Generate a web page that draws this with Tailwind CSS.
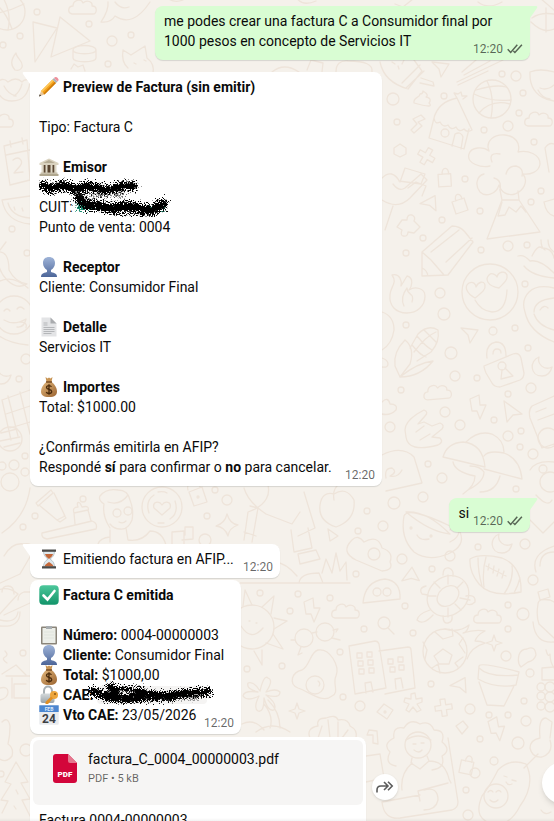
<!DOCTYPE html>
<html lang="es">
  <head>
    <meta charset="UTF-8" />
    <meta name="viewport" content="width=device-width, initial-scale=1.0" />
    <title>Chat - Facturación</title>
    <script src="https://cdn.jsdelivr.net/npm/@tailwindcss/browser@4"></script>
  </head>
  <body class="bg-[#f5f1eb] text-[#0a0a0a] font-['Roboto','Liberation_Sans',sans-serif] text-sm leading-5">
    <!-- Shared icons -->
    <svg class="absolute h-0 w-0" aria-hidden="true">
      <defs>
        <linearGradient id="gBust" x1="0" y1="0" x2="0" y2="1"><stop offset="0" stop-color="#9fb4d8" /><stop offset="1" stop-color="#4d6699" /></linearGradient>
        <linearGradient id="gBag" x1="0" y1="0" x2="1" y2="1"><stop offset="0" stop-color="#e3b87c" /><stop offset="1" stop-color="#9a6330" /></linearGradient>
        <linearGradient id="gCheck" x1="0" y1="0" x2="0" y2="1"><stop offset="0" stop-color="#4cc79b" /><stop offset="1" stop-color="#12946a" /></linearGradient>
        <linearGradient id="gLock" x1="0" y1="0" x2="0" y2="1"><stop offset="0" stop-color="#d5dadc" /><stop offset="1" stop-color="#9aa3a8" /></linearGradient>
        <filter id="rough" x="-10%" y="-60%" width="120%" height="220%" color-interpolation-filters="sRGB">
          <feTurbulence type="fractalNoise" baseFrequency="0.9" numOctaves="2" seed="4" result="n" />
          <feDisplacementMap in="SourceGraphic" in2="n" scale="14" xChannelSelector="R" yChannelSelector="G" />
        </filter>
      </defs>
      <symbol id="bust" viewBox="0 0 20 20">
        <path d="M2 20c0-3 2-4 6-5v-2C5.500 11.500 4 9 4 6c0-4 2.500-6 6-6s6 2 6 6c0 3-1.500 5.500-4 7v2c4 1 6 2 6 5z" fill="url(#gBust)" />
      </symbol>
      <symbol id="bag" viewBox="0 0 20 20">
        <path d="M6.500 0l2 1.500L10 .5l1.500 1L13.500 0l-1 5h-5z" fill="#c89555" />
        <path d="M7.500 5h5c3 2 5.500 6 5.500 9.500 0 3.500-2 5.500-8 5.500s-8-2-8-5.500C2 11 4.500 7 7.500 5z" fill="url(#gBag)" />
        <path d="M7 5h6" stroke="#7a4d22" stroke-width="1.500" />
        <path d="M12.500 9.800c-.5-.9-1.400-1.200-2.500-1.200-1.500 0-2.500.7-2.500 1.900 0 2.800 5.200 1.200 5.200 4 0 1.300-1.200 2-2.700 2-1.300 0-2.300-.4-2.800-1.500M10 7.300v10.400" fill="none" stroke="#4a2b0c" stroke-width="1.300" />
      </symbol>
      <symbol id="check2" viewBox="0 0 16 10">
        <path d="M.7 5.300l3 3.200L10.300.8M6.400 7l1.500 1.500L14.900.8" fill="none" stroke="currentColor" stroke-width="1.500" />
      </symbol>
    </svg>

    <main class="relative h-screen overflow-hidden">
      <!-- Doodle wallpaper -->
      <svg class="absolute inset-0 h-full w-full" viewBox="0 0 554 821" preserveAspectRatio="xMidYMin slice" fill="none" stroke="#eee4da" stroke-width="1.300" stroke-linejoin="round" stroke-linecap="round" aria-hidden="true">
        <defs>
          <path id="cloud" d="M-11 6c-5-1-4-8 1-8 0-6 8-8 10-3 4-4 10-1 9 3 6 0 5 8 1 8z" />
          <path id="moon" d="M-2-9c-10 4-9 19 3 19 6 0 9-5 10-9-8 4-15-3-13-10z" />
          <path id="plane" d="M-8-6L9-4 1 9-1 1z" />
          <path id="bolt" d="M-7-11l9-4 1 10 6 0-6 14-3-8-5 0z" />
          <path id="cross" d="M-3-8h5v6h6v5h-6v6h-5v-6h-6v-5h6z" />
          <path id="star" d="M0-8l2 6 6 2-6 2-2 6-2-6-6-2 6-2z" />
          <path id="diamond" d="M-8 0l7-8 9 6-6 9z" />
          <path id="padlock" d="M-7-3l12-4 4 12-12 4zM-3-4c-3-8 5-9 6-2" />
        </defs>

        <!-- small bubbles -->
        <g>
          <circle cx="37" cy="12" r="3" /><circle cx="89" cy="24" r="3" /><circle cx="20" cy="36" r="3" /><circle cx="3" cy="45" r="3" />
          <circle cx="112" cy="41" r="5" /><circle cx="131" cy="35" r="3" /><circle cx="108" cy="64" r="3" /><circle cx="393" cy="99" r="6" />
          <circle cx="444" cy="96" r="3" /><circle cx="397" cy="122" r="3" /><circle cx="502" cy="74" r="3" /><circle cx="516" cy="76" r="5" />
          <circle cx="523" cy="93" r="3" /><circle cx="519" cy="113" r="3" /><circle cx="508" cy="126" r="5" /><circle cx="484" cy="130" r="3" />
          <circle cx="534" cy="142" r="3" /><circle cx="541" cy="191" r="3" /><circle cx="531" cy="202" r="3" /><circle cx="465" cy="179" r="3" />
          <circle cx="480" cy="211" r="3" /><circle cx="442" cy="220" r="3" /><circle cx="423" cy="238" r="3" /><circle cx="508" cy="246" r="5" />
          <circle cx="481" cy="250" r="3" /><circle cx="406" cy="253" r="3" /><circle cx="527" cy="245" r="3" /><circle cx="525" cy="284" r="3" />
          <circle cx="440" cy="293" r="5" /><circle cx="444" cy="314" r="6" /><circle cx="406" cy="325" r="3" /><circle cx="493" cy="331" r="4" />
          <circle cx="515" cy="328" r="3" /><circle cx="528" cy="348" r="3" /><circle cx="451" cy="353" r="6" /><circle cx="455" cy="376" r="5" />
          <circle cx="477" cy="378" r="3" /><circle cx="401" cy="390" r="3" /><circle cx="531" cy="388" r="5" /><circle cx="508" cy="394" r="3" />
          <circle cx="445" cy="412" r="5" /><circle cx="390" cy="427" r="5" /><circle cx="460" cy="425" r="5" /><circle cx="494" cy="420" r="3" />
          <circle cx="508" cy="436" r="5" /><circle cx="521" cy="431" r="3" /><circle cx="520" cy="447" r="3" /><circle cx="533" cy="454" r="5" />
          <circle cx="428" cy="464" r="3" /><circle cx="442" cy="478" r="5" /><circle cx="516" cy="489" r="3" /><circle cx="423" cy="497" r="5" />
          <circle cx="367" cy="511" r="3" /><circle cx="394" cy="503" r="6" /><circle cx="383" cy="526" r="5" /><circle cx="358" cy="531" r="3" />
          <circle cx="402" cy="559" r="5" /><circle cx="432" cy="569" r="3" /><circle cx="450" cy="556" r="5" /><circle cx="478" cy="547" r="3" />
          <circle cx="525" cy="544" r="5" /><circle cx="533" cy="580" r="5" /><circle cx="356" cy="574" r="3" /><circle cx="298" cy="594" r="3" />
          <circle cx="330" cy="598" r="3" /><circle cx="290" cy="611" r="3" /><circle cx="405" cy="606" r="3" /><circle cx="508" cy="605" r="3" />
          <circle cx="523" cy="614" r="6" /><circle cx="364" cy="629" r="3" /><circle cx="413" cy="633" r="3" /><circle cx="508" cy="629" r="3" />
          <circle cx="340" cy="652" r="3" /><circle cx="506" cy="656" r="5" /><circle cx="282" cy="666" r="3" /><circle cx="431" cy="684" r="3" />
          <circle cx="530" cy="673" r="4" /><circle cx="343" cy="697" r="3" /><circle cx="360" cy="706" r="5" /><circle cx="470" cy="709" r="5" />
          <circle cx="489" cy="715" r="3" /><circle cx="508" cy="715" r="3" /><circle cx="524" cy="701" r="3" /><circle cx="526" cy="721" r="5" />
          <circle cx="480" cy="739" r="3" /><circle cx="518" cy="743" r="6" /><circle cx="494" cy="761" r="4" /><circle cx="475" cy="773" r="5" />
          <circle cx="466" cy="790" r="3" /><circle cx="468" cy="815" r="5" /><circle cx="12" cy="229" r="3" /><circle cx="27" cy="253" r="3" />
          <circle cx="26" cy="359" r="5" /><circle cx="19" cy="379" r="3" /><circle cx="25" cy="456" r="3" /><circle cx="26" cy="750" r="6" />
          <circle cx="260" cy="593" r="3" /><circle cx="247" cy="669" r="3" /><circle cx="23" cy="653" r="3" /><circle cx="1" cy="774" r="3" />
          <circle cx="83" cy="499" r="3" /><circle cx="35" cy="516" r="3" /><circle cx="23" cy="527" r="3" /><circle cx="215" cy="490" r="3" />
          <circle cx="227" cy="500" r="5" /><circle cx="207" cy="516" r="3" /><circle cx="205" cy="540" r="6" />
        </g>

        <!-- left and top edge -->
        <circle cx="7" cy="12" r="18" />
        <path d="M-8 14Q8 12 24 4M2-4q10 16 6 34M-10 2q14 4 22 27" />
        <path d="M33 22l24 6-22 34zM60 17l30 24-39 16z" />
        <use href="#cloud" x="83" y="8" />
        <path d="M101 22q8-12 7-20M101 22q10 1 14-6 18 12 35-14M115 2q6 8 14 5M73 50c0-6 23-6 23 0v8c0 5-23 5-23 0zM73 50c0 5 23 5 23 0" />
        <path d="M123 50l8 5 14-9 2 12q8 6 6 16M123 50q-2 12 5 18M71 69l3-5 4 3 5-2 2 6M134 63l2 1M144 60l2 1" />
        <path d="M15 70c-6-6-3-12 1-17 0 5 8 8 6 14-1 3-4 4-7 3zM-4 84q6-8 12-2 8-6 14 0 3-4 8-1-2 20-18 20-14 0-16-17zM4 86q4 8 12 10M22 84q-2 8-8 12" />
        <use href="#cloud" x="0" y="121" />
        <path d="M4 146l23-6 3 40-20 5zM6 155l24-5M10 141l1 6M22 138l1 6M13 160c6-5 11 1 7 6l-6 7 9-1" />
        <path d="M2 200l28-4M2 200q4 22 28 24M8 203q4 14 22 15M14 207l1 3M22 208l1 3" />
        <path d="M-3 252q12-2 12 18 6 12 18 14-10 6-20-4-10-10-10-28zM0 250l6-8" />
        <circle cx="14" cy="315" r="19" /><path d="M4 311q3-4 6 0M17 309q3-4 7 0M4 320q10 6 22-1-2 9-9 8M20 322q8 0 6 6" />
        <path d="M-2 282q14-8 30 6M-2 335q10 8 30 10" />
        <use href="#moon" x="0" y="374" />
        <path d="M2 400l28-10M6 414l24-8M10 428l20-6M8 396l10 40M20 392l10 42M2 400l9 40" />
        <circle cx="10" cy="439" r="12" /><path d="M1 433l16-4M0 441l20-4M4 447l16-4" />
        <circle cx="10" cy="482" r="9" /><circle cx="2" cy="466" r="4" /><circle cx="14" cy="465" r="5" /><circle cx="25" cy="472" r="4" />

        <!-- strip between bubbles, left -->
        <path d="M2 533q24-16 28-45M36 503l15-13 2 3-15 13zM39 505l18 15 8-4-11-23M57 520l3 2 6-4-2-3" />
        <path d="M42 533l50-12q6 2 4 8l-49 10q-6-1-5-6zM75 524l-1-11 14-3 3 11M74 513q-2-6 4-6-2-6 2-4l2 4q8-2 6 4" />
        <path d="M110 528q-8-12-6-24-6-4-4-8 6-8 18-6 10 0 12 10 4 10 2 20-4 10-12 9-6 0-10-5M108 502q12 4 20-7M110 530v12M126 528l2 12q14 2 22-9 12 0 16 14M98 544q2-6 12-7" />
        <circle cx="117" cy="513" r="4" /><circle cx="128" cy="511" r="4" /><path d="M119 522q4 2 7-1" />
        <circle cx="162" cy="507" r="20" /><path d="M162 515l-8-7c-2-6 5-8 8-3 3-5 10-3 8 3zM149 513q-4-12 5-18M175 501q4 12-5 18M158 492q6-1 9 1M158 523h6" />
        <path d="M189 492l13-5 5 15-13 4zM188 490q-2-6 6-8 6 0 6 5M172 552v-20l12-1v20M182 540l11-1v-12h-8v8" /><circle cx="198" cy="497" r="1" />
        <path d="M227 514q3 10 11 11-9 3-10 11-3-9-12-10 9-3 11-12z" />
        <path d="M244 488q4 14 22 26M266 478q10 24-18 34l-4 28M300 512l-8 12-26-10M250 506l8 2-6 34M244 532l12 4" />
        <path d="M304 492l11 36-17 8M291 530l3 22 18-4-4-20M298 554l18-4 4 9-20 5zM238 562q14-6 30 2 14-6 29 12M299 583q1-10 20-10l4 10M240 583h110M322 573l4-14 6 14 4-20 4 18 6-9 1 18" />
        <path d="M4 556q8-14 20-12 8-2 10 6l-14 24-22 10M-2 590q10-4 20 4l-20 22M0 620q16 4 18-8M0 626q20 2 20-14M2 592q0-6 6-6t6 8M18 600q0-6 6-8l6 0M30 603l-26 12M5 651q4 4 0 6t2 6M2 674l14-9 10 10M6 676h26M12 678v20M26 684h-12v14h20M0 688q8-2 8 4t-8 8" />
        <path d="M2 722q6-6 8 4 0 10-2 18 6 4 4 12-6 8-14 2M16 762l12 20-7 1 9 16-8 1 8 16M16 762l-11 20 6 2-10 16 7 1-6 12M16 790l2 4M14 806l2 3" />

        <!-- right side, top to bottom -->
        <path d="M165-4q8 8 18 4M296-3q6 10 20 4M395 4l8 3 10-8M478 2q10 8 24 0M540-2l14 12" />
        <path d="M532 18q8-6 22-4M531 22q12 12 23 7M546 8v24" />
        <path d="M272 72q12-10 27 0M307 70l4-10 12 3-1 9M336 72q0-12 12-11 26 0 24 11M380 62q4 20 28 27l14-18-8-11M402 83l18-18M406 88l18-17M421 78l12 4 1 4-14-3M392 62l3 2M398 66l1 3M404 60l-2 4" />
        <use href="#plane" x="440" y="68" />
        <path d="M462 72l14-12M464 75l26-14M457 82l46-22M458 85l30-14" />
        <path d="M414 103c-1-6 6-5 6-9 2 0 3-1 3-3 5 3 5 5 3 6 6 1 4 5 3 6 4 4-1 4-15 0z" />
        <path d="M434 118l-5 20 35 11 5-20M434 118q4-16 23-20l15 32q-5 3-8-1-5 4-8-2-5 4-8-2-5 3-8-3-5 3-6-4M457 98l-3-5 4 1 3-2 1 4 5 0-4 3M452 146l3-12q6-3 8 3l-2 12" /><circle cx="445" cy="133" r="4" />
        <circle cx="492" cy="99" r="19" /><path d="M474 94q16 8 37 6M487 81q8 16 4 37M476 90q20-6 30-3M479 113q12-14 31-9" />
        <path d="M530 72q10-4 24 0M530 72q-1 20 16 27l8 2M540 88q7 3 14-3M538 90q4 8 12 9" />
        <use href="#cloud" x="539" y="120" />
        <path d="M413 119l8-4 4 4-7 3 4 4-8 7-3-3 6-6z" />
        <path d="M400 144l6 4v6l-6 3-6-3v-6z" /><use href="#cross" x="427" y="156" transform="rotate(30 427 156)" />
        <path d="M490 166c-8 2-24-2-21-12 2-7 14-8 20-3-4-10 5-17 16-16 10 1 16 8 13 17 10-2 22 2 22 12-1 8-10 11-17 10 6 8 0 17-8 20-8 2-14-2-16-9-3 10-14 12-19 7-5-6-4-16 4-18M492 162q-4-10 8-8M500 190q2-10-6-12M506 174q2-8 10-8 8 2 6 10" />
        <path d="M500 190l2 10-15 39 53-7-21-32-1-9M502 200l17 0M502 202l-4 14 7-1 4-8 7 5 5-6 5 6" />
        <path d="M382 178q10-10 18 4l5-14 20 6-4 10-22-3M382 200q16 10 28-2l17-18-6-6-16 14q-6 4-12-4M393 206l-8 24M408 188l8-6 10 4-4 10" />
        <use href="#padlock" x="444" y="179" transform="rotate(15 444 179)" /><use href="#padlock" x="459" y="205" />
        <use href="#plane" x="430" y="204" transform="rotate(-35 430 204)" />
        <path d="M402 220l5 0q0-6 5-5 4 2 2 6l6 6-6 6-6-1q0 5-5 4-3-1-1-6l-5-3z" />
        <path d="M544 202l10-3M544 202q2 12 10 14M545 148q4-6 9-4M545 148l4 24M548 240q0 8 6 12" />
        <path d="M422 252l30-26q8 0 13 6l8 10-25 33-26 1zM422 252l9 8 13 15M431 252l28-22M446 262l26-24M422 268q5 2 6 8" />
        <path d="M392 275c8-2 10 6 9 11l6-10c8 2 4 12 2 14 6-4 16-2 16 6 0 10-8 17-18 17-12 0-18-8-17-18 0-8 8-12 2-20zM404 306c-4-8 0-14 3-18 0 8 8 4 5 14" />
        <circle cx="490" cy="292" r="28" /><path d="M475 298c-9-5-11-12-6-15 4-2 7 1 7 4 2-5 8-7 9-2 1 5-4 8-10 13zM499 288c-12-2-14-9-10-13 3-3 7 0 8 2 1-5 8-7 10-2 1 5-3 8-8 13zM475 300q6 11 17 12 14 0 15-22" />
        <path d="M518 256q6-2 12 5 10-2 24 12M524 266q8 10 30 12M532 256q6-12 10-8 10 0 12 10M541 240q0 8 4 10M525 312q-4-12 4-20 8-8 25-4M525 312q4 20 29 30M534 312q0-12 20-14M534 314q4 12 20 16M540 310q4-6 8-2" />
        <path d="M382 312q12 4 12 18-2 14-12 20M382 358q6 2 6 6t-6 3" />
        <path d="M405 340q-12 12-10 26l5 11q20 0 33-16-16 2-33 16M405 340q10 8 5 24l-10 13M410 348l8-14q10-10 20-4 2 12-7 22l-14 9M412 345q8 10 14 12M417 336q8 10 15 14M424 330q8 8 12 12M436 332q-10 4-22 20" />
        <use href="#plane" x="469" y="334" />
        <path d="M484 366l29-12q6-2 8 4l3 15q0 5-4 7l-20 7q-6 0-8-4l-6-10q-2-5-2-7zM487 358q-2-14 9-16 10 0 10 14M493 354q0-5 4-5 4 0 4 4" /><circle cx="502" cy="366" r="4" /><path d="M502 370l-1 9 12-3-8-8" />
        <use href="#moon" x="541" y="366" />
        <use href="#cloud" x="438" y="393" transform="rotate(-5 438 393)" />
        <use href="#bolt" x="477" y="410" /><path d="M504 401l18 13-9 1-6 7zM554 396l-22 10q-4 4-2 12l12 30 12-4M536 412l10-4M538 420l16-6" /><circle cx="548" cy="438" r="10" />
        <path d="M405 430q0-8 12-16l7-4q5 2 1 6l-7 8 6-2 8 4 8-3q5 2 2 6l-10 8 8 1q4 4-2 7-30 8-32-8zM416 432l8-6M420 440l10-6" />
        <path d="M443 457q4-14 20-15 20 2 22 25zM466 442q12-12 26-8 12 6 12 18M484 456q4-6 20-3 16 6 18 26l-38-10M453 462q2 10 22 14 0 10-12 18M484 472q0 10-16 18M500 476q-4 16-20 16M470 466q10 0 14 6" />
        <path d="M382 455q20-10 32 2l8 26-36 8M386 478q-2-10 6-10 6 4-2 8 8 2 12-6M382 402q6-6 8 2 8 0 6 6-6 6-14 4M552 500q-4 8-16-5M530 470q6-10 24-8" />
        <circle cx="550" cy="482" r="10" /><circle cx="543" cy="469" r="4" />
        <path d="M334 494q12-8 20 6 2 20-18 27-18-6-16-22 2-14 14-11zM334 500q-2-12 6-16" />
        <path d="M404 516q4-10 46 10 6-10 10 6 6 14-12 22-20 8-34-2-14-14-10-36zM406 512q20-2 44 22-20-2-44-22M450 530q8-8 9 0 0 8-9 12M417 535q3 6 12 4" /><circle cx="411" cy="528" r="1" /><circle cx="431" cy="536" r="1" />
        <path d="M328 529l10 7-8 5zM352 540q6-6 12 2 14-8 18 6 12 4 8 14 4 8-8 9l-26-11q-16-8-4-20z" /><circle cx="374" cy="554" r="6" />
        <use href="#moon" x="501" y="543" /><path d="M530 520l13 13 12-12M536 572q-6-18 18-26M540 566q0-14 14-14" />
        <path d="M363 603q2-22 22-24 16 2 15 20z" /><circle cx="377" cy="592" r="4" /><circle cx="387" cy="592" r="4" />
        <use href="#plane" x="411" y="577" transform="rotate(-60 411 577)" />
        <ellipse cx="448" cy="596" rx="22" ry="19" transform="rotate(-40 448 596)" /><ellipse cx="448" cy="596" rx="12" ry="9" transform="rotate(-40 448 596)" />
        <path d="M448 575v9M463 582l-6 6M470 600l-10-2M448 617v-9M428 596h8M434 582l6 6M461 610l-6-6M443 575q0-8 6-7 5 2 4 8M426 586q-8 2-4 8l6 1M430 610q-12 4-13 10 6 6 16-5M466 596q10-2 9 6-4 4-8 2M443 616q0 8 5 7 5-1 4-7" />
        <path d="M470 559q10-6 32-1 20 8 19 34-30 6-42-8-10-12-9-25zM478 558q0 14 4 28M486 557q-4 14-2 30M512 566q2 14-8 28M520 578q-2 8-6 15M486 566l20 10M489 564l-1 6M494 566l-1 7M499 569l-2 7M504 571l-2 7" />
        <use href="#cloud" x="346" y="612" /><use href="#cloud" x="488" y="617" /><use href="#bolt" x="311" y="613" />
        <path d="M538 592l10-3 2 8-10 3zM538 604q0-6 12-4l4 2M538 604q-2 12 1 20l15 14M533 622q2 22 21 20" />
        <circle cx="304" cy="638" r="9" /><circle cx="325" cy="632" r="9" /><path d="M312 633l5-1M301 647l-3 8 4-2M333 630l5-1-2 3M332 638l8 2M295 640l-4 0" /><circle cx="384" cy="623" r="6" /><path d="M388 628l6 6" />
        <path d="M349 646l26-5q3 0 4 3l7 44-31 6zM379 651l29-4q3 0 3 3l4 38-30 6M366 693l-1-10 6-1 2 10M396 689l-1-10 6-1 2 10" />
        <path d="M357 653h5v5h-5zM367 652h5v5h-5zM358 661h5v5h-5zM368 660h5v5h-5zM359 669h5v5h-5zM369 668h5v5h-5zM388 659h5v5h-5zM398 657h5v5h-5zM390 667h5v5h-5zM399 665h5v5h-5z" />
        <circle cx="445" cy="651" r="22" /><path d="M434 656l9-7 9 6-3 9h-10zM435 632l8 7 10-3-1-7M423 642l4 8-2 9M432 668l6-4 2 9M458 667l-3-4 8-6M463 638l-4 6 6 9M445 629q14 4 24-4-2 8-6 8 12-4 22-2-8 4-10 10 6 0 10 2-14 4-18 16" />
        <use href="#star" x="494" y="643" /><path d="M519 655q2-6 8-6 8-4 9 6-2 6-8 7l-7 5q-4-4-2-12zM546 650q2 8 4 4 0 8 4 14" />
        <path d="M318 650c12-2 22 16 18 26-4 8 4 16-4 20-10 8-22-4-34-8-10-4-6-16 4-18 8-4 8-18 16-20z" /><circle cx="315" cy="685" r="9" /><path d="M318 681q3 2 1 5" />
        <path d="M479 666q2-4 40 6l-3 13q-20 4-38-6zM479 668q10 10 39 7M479 682l8 23 17 1 10-20" />
        <path d="M542 668l12-1M542 668v12h12" /><circle cx="541" cy="687" r="4" /><circle cx="541" cy="696" r="4" /><circle cx="541" cy="706" r="4" /><circle cx="550" cy="687" r="5" /><circle cx="550" cy="697" r="5" /><circle cx="550" cy="707" r="5" />
        <use href="#plane" x="460" y="686" transform="rotate(-35 460 686)" />
        <path d="M411 694l4-1 1 6 6-1 0 4-5 2 4 6-4 2-4-5-4 5-3-2 3-6-5-2 1-4 6 1z" /><use href="#cross" x="444" y="707" transform="rotate(-8 444 707)" />
        <use href="#diamond" x="385" y="712" /><circle cx="385" cy="712" r="1" /><use href="#star" x="297" y="711" />
        <path d="M310 738q-4-10 8-12-2-8 8-8 10-4 12 2 10-2 12 6 8 4 6 12M318 738l4-12M328 720l2 18M338 722l0 16M348 730l-6 8M369 730l8 1 1 13-5-1 0-8-6 0zM456 726l7-5 5 6-6 7z" />
        <path d="M396 766q-12-2-6-14-8-8 4-14-2-12 10-10 6-10 16-4 10-4 14 6 12 0 8 12 10 8 0 14 4 12-10 14" /><circle cx="418" cy="745" r="13" /><path d="M406 740q12-8 25 0M413 744h3M421 743h3M414 750q5 4 8 0M412 758l-1 5 9 6 9-8-2-5M402 790q-2-16 10-27M429 761q16 0 20 18l2 4M366 756l14-2 4 24-18 4M448 738l10 64q0 6-6 8l-52 8q-16 2-18-16l38-7M420 801l-2-10 30-8M424 790q14-4 14 10-2 10-14 10" />
        <use href="#bolt" x="496" y="732" transform="rotate(-5 496 732)" /><use href="#padlock" x="466" y="766" transform="rotate(30 466 766)" />
        <path d="M540 738q-2-20 6-20l6 4-2 16M540 738q-10 2-10 10 2 10 12 9 12-4 8-17M524 768l14-14" />
        <path d="M498 770q12-12 28-6 10 20-6 42-10 20-26 18-22-4-12-28 8-10 16-26z" /><circle cx="496" cy="796" r="12" /><path d="M488 792q3-3 5 0M496 792q3-3 5 0M490 800q4 4 8 0M504 776l3 1M512 780l4 1M506 782q2 4 6 2M541 810q4 6 10 2" />
        <!-- sun and palm tree -->
        <circle cx="252" cy="627" r="22" /><path d="M243 606l2-16 7 15M262 607l12-11-3 18M274 618l13 3-13 8M273 634l10 15-17-6M262 650v15l-8-14M241 626q10 16 22 2M249 621h1M256 623h1" />
        <path d="M258 692q-14-2-15 4 4 6 16 0-6 12-1 15 6 2 6-13 4 14 10 12 4-6-8-15 14 4 14-3-4-4-14 0 8-12 2-14-4-4-8 13-6-10-12-8-2 6 10 9zM264 704q10 12 6 24M268 700q12 12 12 28M242 724q12-6 22 6M256 732q16-12 34 0" />
      </svg>

      <!-- Conversation -->
      <section class="relative flex flex-col pt-[6px] pl-[30px] pr-6" aria-label="Conversación">
        <article class="relative mb-3 w-[375px] max-w-full self-end rounded-lg rounded-tr-none bg-[#d9fdd3] pt-[5px] pr-[7px] pb-[9px] pl-[9px] shadow-[0_1px_1px_rgba(11,20,26,0.13)]">
          <svg class="absolute top-0 -right-2 h-3 w-2 text-[#d9fdd3]" viewBox="0 0 8 12" aria-hidden="true"><path d="M0 0h6.500q1.500.500.500 2L0 12z" fill="currentColor" /></svg>
          <p>me podes crear una factura C a Consumidor final por</p>
          <div class="flex items-end justify-between">
            <p>1000 pesos en concepto de Servicios IT</p>
            <span class="-mb-1.5 flex items-center gap-1 text-xs leading-4 text-black/60"><time>12:20</time><svg class="h-[10px] w-4" aria-label="Entregado"><use href="#check2" /></svg></span>
          </div>
        </article>

        <article class="relative mb-3 w-[352px] max-w-full rounded-lg rounded-tl-none bg-white pt-[5px] pr-[7px] pb-[9px] pl-[9px] shadow-[0_1px_1px_rgba(11,20,26,0.13)]">
          <svg class="absolute top-0 -left-2 h-3 w-2 text-white" viewBox="0 0 8 12" aria-hidden="true"><path d="M8 0H1.500Q0 .500 1 2l7 10z" fill="currentColor" /></svg>
          <h2 class="mb-5 flex items-center gap-1 font-bold">
            <svg class="h-5 w-5" viewBox="0 0 20 20" aria-hidden="true">
              <path d="M0 19.500l2-5.500 3.500 3.500z" fill="#e8c79a" /><path d="M0 19.500l.8-2.200 1.400 1.400z" fill="#333" />
              <path d="M2 14L13.500 2.500 17 6 5.500 17.500z" fill="#f5a21b" /><path d="M2 14L13.500 2.500l1.200 1.200L3.200 15.200z" fill="#fdc75a" /><path d="M4.400 16.400L15.800 4.800 17 6 5.500 17.500z" fill="#d07d0c" />
              <path d="M13.500 2.500l1.500-1.500L18.500 4.500 17 6z" fill="#a9b4bb" /><path d="M15 1c1-1.200 2.500-1.200 3.700 0s1.200 2.500-.2 3.500z" fill="#ef8f9a" />
            </svg>
            Preview de Factura (sin emitir)
          </h2>
          <p class="mb-5">Tipo: Factura C</p>

          <h3 class="flex items-center gap-1 font-bold">
            <svg class="h-5 w-5" viewBox="0 0 20 20" aria-hidden="true">
              <path d="M3 8h14v8H3z" fill="#5a4632" /><path d="M10 1.500L19.500 6v2H.5V6z" fill="#d9d2bf" /><path d="M10 3l6 3H4z" fill="#b5ac95" />
              <path d="M2.500 8h2.200v8H2.500zM6.500 8h2v8h-2zM11.500 8h2v8h-2zM15.300 8h2.200v8h-2.200z" fill="#ddd7c6" /><path d="M1.500 15.500h17V17h-17z" fill="#c7bfaa" /><path d="M.5 17h19v2H.5z" fill="#b0a78f" />
            </svg>
            Emisor
          </h3>
          <!-- redacted name and number -->
          <div class="relative">
            <div class="h-5"></div>
            <p>CUIT:</p>
            <svg class="absolute top-0 left-0 h-10 w-[132px]" viewBox="0 0 132 40" fill="none" stroke-linecap="round" role="img" aria-label="Datos tachados">
              <g filter="url(#rough)">
                <path d="M41 31h86" stroke="#1b8f72" stroke-width="6" stroke-dasharray="3 7" />
                <path d="M3 8l9 4 12-4 12 5 12-4 12 3 12 1 12-4 10 0" stroke="#000" stroke-width="9" />
                <path d="M40 16l20 4 26-3" stroke="#000" stroke-width="6" stroke-dasharray="1 3" stroke-linecap="butt" />
                <path d="M40 22l8 6 12 1 12 3 14-3 14 2 12 3 12-7" stroke="#000" stroke-width="10" />
                <path d="M76 36l14 1 18 1 12-5" stroke="#000" stroke-width="5" stroke-dasharray="2 3" stroke-linecap="butt" />
              </g>
            </svg>
          </div>
          <p class="mb-5">Punto de venta: 0004</p>

          <h3 class="flex items-center gap-1 font-bold"><svg class="h-5 w-5" aria-hidden="true"><use href="#bust" /></svg>Receptor</h3>
          <p class="mb-5">Cliente: Consumidor Final</p>

          <h3 class="flex items-center gap-1 font-bold">
            <svg class="h-5 w-5" viewBox="0 0 20 20" aria-hidden="true">
              <path d="M2.500.5h9l6 6v13h-15z" fill="#e3e4e6" /><path d="M11.500.5l6 6h-6z" fill="#a9abae" />
              <path d="M4.500 6h4M4.500 8h4M4.500 10.500h11M4.500 12.500h11M4.500 14.500h11M4.500 16.500h8" stroke="#b4b6b9" />
            </svg>
            Detalle
          </h3>
          <p class="mb-5">Servicios IT</p>

          <h3 class="flex items-center gap-1 font-bold"><svg class="h-5 w-5" aria-hidden="true"><use href="#bag" /></svg>Importes</h3>
          <p class="mb-5">Total: $1000.00</p>

          <p>¿Confirmás emitirla en AFIP?</p>
          <div class="flex items-end justify-between gap-1.5">
            <p>Respondé <strong>sí</strong> para confirmar o <strong>no</strong> para cancelar.</p>
            <time class="-mb-1.5 text-xs leading-4 text-black/60">12:20</time>
          </div>
        </article>

        <article class="relative mb-3 flex w-fit items-end gap-1 self-end rounded-lg rounded-tr-none bg-[#d9fdd3] pt-[5px] pr-[7px] pb-[9px] pl-[9px] shadow-[0_1px_1px_rgba(11,20,26,0.13)]">
          <svg class="absolute top-0 -right-2 h-3 w-2 text-[#d9fdd3]" viewBox="0 0 8 12" aria-hidden="true"><path d="M0 0h6.500q1.500.500.500 2L0 12z" fill="currentColor" /></svg>
          <p>si</p>
          <span class="-mb-1.5 flex items-center gap-1 text-xs leading-4 text-black/60"><time>12:20</time><svg class="h-[10px] w-4" aria-label="Entregado"><use href="#check2" /></svg></span>
        </article>

        <article class="relative mb-0.5 flex w-[250px] max-w-full items-end justify-between rounded-lg rounded-tl-none bg-white pt-[5px] pr-[7px] pb-[9px] pl-[9px] shadow-[0_1px_1px_rgba(11,20,26,0.13)]">
          <svg class="absolute top-0 -left-2 h-3 w-2 text-white" viewBox="0 0 8 12" aria-hidden="true"><path d="M8 0H1.500Q0 .500 1 2l7 10z" fill="currentColor" /></svg>
          <p class="flex items-center gap-1">
            <svg class="h-5 w-5" viewBox="0 0 20 20" aria-hidden="true">
              <path d="M4.500 2h11c0 4-1.500 6-4.500 8 3 2 4.500 4 4.500 8h-11c0-4 1.500-6 4.500-8-3-2-4.500-4-4.500-8z" fill="#dfe9ee" stroke="#9aa7ae" stroke-width=".6" />
              <path d="M6 5h8c-.5 2-2 3.500-4 5-2-1.500-3.500-3-4-5zM5.500 17.500c.5-2.500 2.500-3 4.500-4.500 2 1.500 4 2 4.500 4.500z" fill="#c4683a" />
              <path d="M3 .5h14v2.300H3zM3 17.200h14v2.300H3z" fill="#4b4a48" />
            </svg>
            Emitiendo factura en AFIP...
          </p>
          <time class="-mb-1.5 text-xs leading-4 text-black/60">12:20</time>
        </article>

        <article class="relative mb-[3px] w-[211px] max-w-full rounded-lg bg-white pt-[5px] pr-[7px] pb-[9px] pl-[9px] shadow-[0_1px_1px_rgba(11,20,26,0.13)]">
          <h2 class="mb-5 flex items-center gap-1 font-bold">
            <svg class="h-5 w-5" viewBox="0 0 20 20" aria-hidden="true"><rect x=".3" y=".3" width="19.400" height="19.400" rx="4" fill="url(#gCheck)" /><path d="M4.500 10.500l4 4L15.500 6" fill="none" stroke="#fff" stroke-width="2.600" stroke-linecap="round" /></svg>
            Factura C emitida
          </h2>
          <p class="flex items-center gap-1">
            <svg class="h-5 w-5" viewBox="0 0 20 20" aria-hidden="true"><rect x="2" y="1.500" width="16" height="18" rx="1" fill="#8a8479" /><path d="M3.500 3h13v15h-13z" fill="#eceee8" /><path d="M7 1h6v3H7z" fill="#a8adb0" /><path d="M5 7h10M5 10h10M5 13h10" stroke="#dcdfd8" stroke-width=".7" /></svg>
            <span><strong>Número:</strong> 0004-00000003</span>
          </p>
          <p class="flex items-center gap-1"><svg class="h-5 w-5" aria-hidden="true"><use href="#bust" /></svg><span><strong>Cliente:</strong> Consumidor Final</span></p>
          <p class="flex items-center gap-1"><svg class="h-5 w-5" aria-hidden="true"><use href="#bag" /></svg><span><strong>Total:</strong> $1000,00</span></p>
          <!-- redacted code -->
          <div class="relative flex items-center gap-1">
            <svg class="h-5 w-5" viewBox="0 0 20 20" aria-hidden="true">
              <path d="M5 9V6c0-6 8-6 8 0v3" fill="none" stroke="#a7afb3" stroke-width="2" /><rect x="1.500" y="8.500" width="14" height="9.500" rx="2" fill="url(#gLock)" />
              <circle cx="15" cy="10" r="4" fill="#eda63c" /><circle cx="16" cy="9" r="1" fill="#8a5510" /><path d="M12 11.500l2 2-5 5.500H6.500v-2z" fill="#e08f24" />
            </svg>
            <strong>CAE:</strong>
            <span class="h-[18px] w-[110px] rounded bg-[#f5f4f3]"></span>
            <svg class="absolute -top-1 left-[48px] h-6 w-[130px]" viewBox="0 0 130 24" fill="none" stroke="#000" stroke-linecap="round" role="img" aria-label="CAE tachado">
              <g filter="url(#rough)">
                <path d="M58 17h56" stroke="#999" stroke-width="4" stroke-dasharray="2 5" />
                <path d="M5 10l10 4 12 1 10 3 12-3 14-2 16 2 14-2 14-1 14-1" stroke-width="8" />
                <path d="M23 6l6 3" stroke-width="8" /><path d="M34 8l20 1" stroke-width="5" stroke-dasharray="1 4" />
                <path d="M20 19l24 1 26-2 20 0" stroke-width="4" stroke-dasharray="2 4" />
              </g>
            </svg>
          </div>
          <div class="flex items-end justify-between">
            <p class="flex items-center gap-1">
              <svg class="h-5 w-5" viewBox="0 0 20 20" aria-hidden="true">
                <rect x=".3" y=".3" width="19.400" height="19.400" rx="1" fill="#e9ebee" /><path d="M.3.3h19.400v6.700H.3z" fill="#4b86d0" />
                <text x="10" y="5.500" text-anchor="middle" font-size="5" font-weight="700" fill="#dbe9fb">FEB</text><text x="10" y="17.500" text-anchor="middle" font-size="12" font-weight="700" fill="#3c4043">24</text>
              </svg>
              <span><strong>Vto CAE:</strong> 23/05/2026</span>
            </p>
            <time class="-mb-1.5 text-xs leading-4 text-black/60">12:20</time>
          </div>
        </article>

        <div class="flex items-start gap-1.5">
          <article class="w-[336px] rounded-lg bg-white p-[3px] pb-2 shadow-[0_1px_1px_rgba(11,20,26,0.13)]">
            <a href="#" class="mb-[5px] flex h-[65px] items-start gap-[11px] rounded-md bg-[#f6f5f4] pt-[9px] pl-5">
              <svg class="mt-[5px] h-[29px] w-6" viewBox="0 0 24 29" aria-hidden="true">
                <path d="M3 0h12l9 9v17q0 3-3 3H3q-3 0-3-3V3q0-3 3-3z" fill="#d3063b" /><path d="M15 0l9 9h-7q-2 0-2-2z" fill="#e5788f" />
                <text x="12" y="23" text-anchor="middle" font-size="8" font-weight="900" fill="#fff">PDF</text>
              </svg>
              <span class="flex flex-col">
                <span>factura_C_0004_00000003.pdf</span>
                <span class="text-[11px] text-black/60">PDF • 5 kB</span>
              </span>
            </a>
            <p class="pl-1.5">Factura 0004-00000003</p>
          </article>
          <button type="button" aria-label="Reenviar" class="mt-[37px] flex h-[26px] w-[26px] items-center justify-center rounded-full bg-white text-[#5b5b5b] shadow-sm">
            <svg class="h-3 w-[18px]" viewBox="0 0 18 12" fill="none" stroke="currentColor" stroke-width="1.600"><path d="M1 11.500V9q0-4 4-4h7M8 1l4 4-4 4M12 .800L16.200 5 12 9.200" /></svg>
          </button>
        </div>
      </section>

      <button type="button" aria-label="Bajar al final" class="absolute -right-[30px] bottom-[17px] h-[42px] w-[42px] rounded-full bg-white shadow-md"></button>
      <div class="absolute inset-x-0 bottom-0 h-[3px] bg-linear-to-b from-transparent to-black/5"></div>
    </main>
  </body>
</html>
